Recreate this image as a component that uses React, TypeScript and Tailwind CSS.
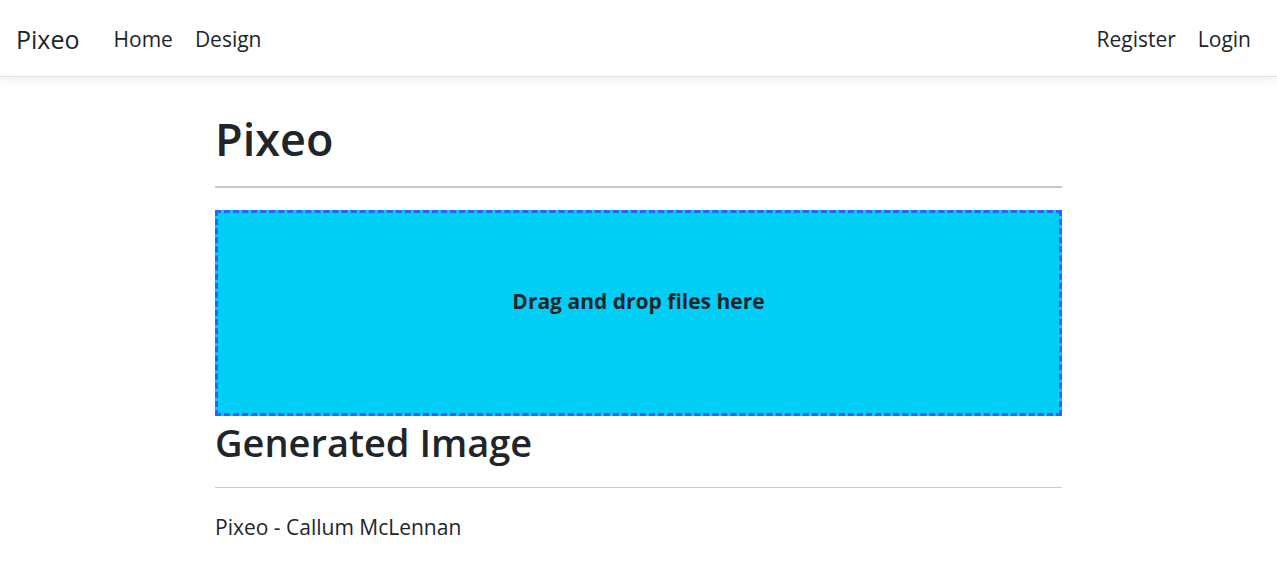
export default function App() {
  return (
    <div className="min-h-screen bg-white text-[#212529]" style={{ fontFamily: '"Open Sans", "Noto Sans", sans-serif' }}>
      <nav className="flex h-[77px] items-center justify-between border-b border-[#dee2e6] pl-4 pr-[26px] pt-[3px] shadow-[0_4px_10px_rgba(0,0,0,0.06)]">
        <div className="flex items-center">
          <span className="text-[25px]">Pixeo</span>
          <a className="ml-[34px] text-[21px]">Home</a>
          <a className="ml-[22px] text-[21px]">Design</a>
        </div>
        <div className="flex items-center">
          <a className="text-[21px]">Register</a>
          <a className="ml-[22px] text-[21px]">Login</a>
        </div>
      </nav>
      <main className="mx-auto w-[847px] pt-[35px]">
        <h1 className="text-[45px] font-semibold leading-[1.2]">Pixeo</h1>
        <hr className="mt-[20px] border-t-2 border-[#c8c8c8]" />
        <div className="mt-[22px] flex h-[206px] items-center justify-center border-[3px] border-dashed border-[#2962ff] bg-[#00cef5] pb-[22px]">
          <span className="text-[21px] font-bold">Drag and drop files here</span>
        </div>
        <h2 className="mt-[4px] text-[38px] font-semibold leading-[1.2]">Generated Image</h2>
        <hr className="mt-[21px] border-[#cccccc]" />
        <p className="mt-[24px] text-[21px]">Pixeo - Callum McLennan</p>
      </main>
    </div>
  );
}
